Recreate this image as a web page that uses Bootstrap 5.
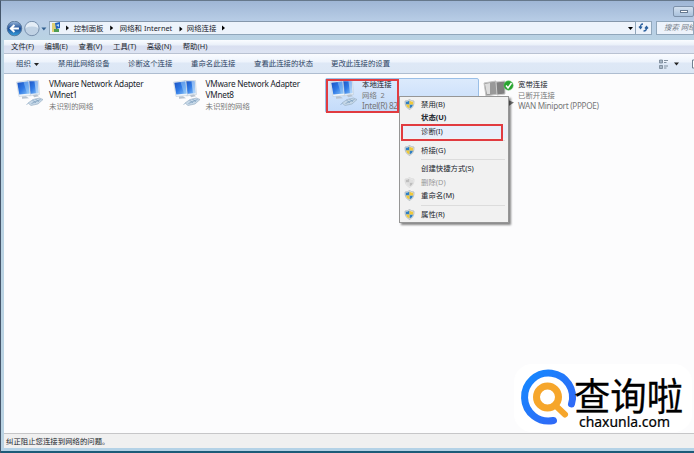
<!DOCTYPE html>
<html lang="zh-CN">
<head>
<meta charset="utf-8">
<title>网络连接</title>
<link href="https://cdn.jsdelivr.net/npm/bootstrap@5.3.0/dist/css/bootstrap.min.css" rel="stylesheet">
<style>
body{width:694px;height:453px;overflow:hidden;font:7.4px/11px "Noto Sans","Noto Sans CJK SC",sans-serif;color:#20242c;background:#b6d3e5}
.win{height:453px;border-left:1px solid #45566b;border-top:1px solid #66788b;background:linear-gradient(#9fb6d5 0,#b8cde6 20px,#bad3e3 40px)}
.title-strip{height:20px}
.min-btn{width:21px;height:11px;margin:5px 0 0 672px;border:1px solid #7d91aa;border-radius:2px;background:linear-gradient(#d2e0ef,#aac1dc)}
.min-btn i{width:8px;height:3px;border:1px solid #667990;background:#fff}
.addr{height:19px}
.nav-btns{width:48px;height:19px}
.crumbs{width:589px;height:14px;border:1px solid #91a7bb;border-top-color:#8597ab;background:#edf3fb}
.crumb-mid{width:67px}
.reload{width:16px;height:14px;border:1px solid #91a7bb;border-left:0;background:#edf3fb}
.search{width:38px;height:14px;margin-left:4px;border:1px solid #91a7bb;background:#edf3fb;color:#777f8a;font-style:italic;padding-left:7px}
.body-area{margin-left:3px;height:408px;background:#fcfcfd}
.menus{height:14px;background:linear-gradient(#fafcff 0,#eaf0f9 5px,#d9dff0 6px,#dde4f3);border-bottom:1px solid #b9c2d2;padding-left:7px}
.tools{height:20px;background:linear-gradient(#fafcff 0,#edf3fc 8px,#dee8f6 9px,#dce7f5);border-bottom:1px solid #aebdd0;padding-left:12px;color:#2d4463}
.menus span,.tools span,.crumbs span{flex:none;white-space:nowrap}
.files{height:359px}
.conn{width:156.500px;padding:5px 0 0 11px;height:40px;line-height:10.8px;white-space:nowrap}
.conn svg{flex:none}
.conn .label{margin-left:4px;font-size:8.2px;letter-spacing:-.22px}
.conn .zh{font-size:7.4px;letter-spacing:0}
.conn .latin{font-size:8.2px;letter-spacing:-.3px}
.muted{color:#777}
.picked{margin:4px 0 0 8px;height:35px;background:linear-gradient(#dceafc,#c3dbfa);border:1px solid #9abfe7;border-radius:2px;padding:0 0 0 3px;width:154px;overflow:hidden}
.picked .label{margin-left:3px}
.status-row{height:15px;background:#f0f0f0;border-top:1px solid #c6c6c8;padding-left:2px;line-height:14px}
.frame-end{height:5px;background:#b4d2e6;border-bottom:2px solid #1c5b78}
.red-box{position:absolute;border:2px solid #e13b40}
.popup{position:absolute;left:399px;top:96px;width:110px;height:127px;background:#f1f1f1;border:1px solid #969696;box-shadow:2px 2px 2px #0007;padding:.6px 1px 0}
.entry{height:13.6px;padding-left:3px;white-space:nowrap}
.entry svg,.entry b.gap{width:11px;height:11px;flex:none;margin-right:6px}
.hot{background:#e8effa}
.off{color:#999}
.off svg{filter:grayscale(1);opacity:.4}
.sep{height:1px;margin:2px 2px 2px 20px;background:#dcdcdc}
.brand{position:absolute;left:512px;top:362px;width:182px;height:72px}
</style>
<script src="https://cdn.jsdelivr.net/npm/bootstrap@5.3.0/dist/js/bootstrap.bundle.min.js"></script>
</head>
<body>
<svg width="0" height="0" class="position-absolute">
<defs>
<linearGradient id="scr" x2="1" y2="1"><stop stop-color="#1a50c0"/><stop offset=".5" stop-color="#2f7ae6"/><stop offset="1" stop-color="#8fc7f8"/></linearGradient>
<linearGradient id="orb" x2="0" y2="1"><stop stop-color="#9db9da"/><stop offset=".5" stop-color="#1d4f99"/><stop offset="1" stop-color="#36a2df"/></linearGradient>
<linearGradient id="ring" x2="1" y2="1"><stop stop-color="#1489ff"/><stop offset="1" stop-color="#3564f5"/></linearGradient>
<symbol id="pcs" viewBox="0 0 30 30">
<path d="M12 1.500l11.500 0 1 14-10 1.500z" fill="#e4ebf3" stroke="#b9c6d3" stroke-width=".5"/><path d="M13 2.200h9.500l.8 11.800-9 1z" fill="url(#scr)"/><path d="M19.500 2.200h3l.8 11.800-2.300.3z" fill="#cfe6fc" opacity=".6"/>
<path d="M1.500 3l12.500-1.500 1.500 15-11.500 1z" fill="#f0f5fa" stroke="#b9c6d3" stroke-width=".5"/><path d="M2.300 3.800l11-1.400 1.300 12.200-10.300.9z" fill="url(#scr)"/><path d="M8.500 3l4.800-.6 1.300 12.200-2.600.2z" fill="#9fd0fa" opacity=".5"/>
<path d="M7 17.500l4-.3 3 2-7 .5zM18 16l4-.5 2 1.700-5 1z" fill="#b8c3cf"/>
<path d="M13 24l5-3.500 6.500-1.500 3.500 1.500-5 4.500-7 1.500z" fill="#c6d8e8" stroke="#92a9bf" stroke-width=".6"/><path d="M17.500 21.300l3.500 2.400M20.500 20.300l3.500 2.400M16.500 24.500l9-4M13 24.500l-1.500 1" stroke="#6b90b4" stroke-width=".6" fill="none"/>
</symbol>
<symbol id="shield" viewBox="0 0 11 11"><path d="M5.500 .5Q7.500 2 10 2Q10.500 8 5.500 10.500Q.5 8 1 2Q3.500 2 5.500 .5z" fill="#e6e9ea" stroke="#98a3aa" stroke-width=".6"/><path d="M5.500 1.500V5.500H1.800V2.800Q4 2.700 5.500 1.500zM5.500 5.500H9.100Q8.500 8.300 5.500 9.600z" fill="#2e7fc4"/><path d="M5.500 1.500V5.500H9.200V2.800Q7 2.700 5.500 1.500zM5.500 5.500H1.900Q2.500 8.300 5.500 9.600z" fill="#efc83b"/></symbol>
</defs>
</svg>
<main class="win">
<div class="title-strip d-flex"><div class="min-btn d-flex justify-content-center align-items-center"><i></i></div></div>
<div class="addr d-flex align-items-start">
<svg class="nav-btns" viewBox="1 21 48 19"><circle cx="14.500" cy="28.500" r="7.300" fill="url(#orb)" stroke="#526e91" stroke-width=".8"/><path d="M19 28.500h-8M14.500 25l-3.700 3.500 3.700 3.500" fill="none" stroke="#fff" stroke-width="2"/><circle cx="32" cy="28.500" r="7.200" fill="#c0d2e4" stroke="#7890ac"/><path d="M25.500 28q6.500-3 13 0a6.500 6 0 0 0-13 0z" fill="#e4edf6"/><path d="M41.500 27.500h5l-2.500 3z" fill="#315f90"/></svg>
<div class="crumbs d-flex align-items-center">
<svg width="24" height="12" viewBox="50 22 24 12" class="flex-shrink-0"><path d="M52 23h5v9h-5z" fill="#e1cf72"/><path d="M55 23l5-1v6l-4 1z" fill="#2162be"/><path d="M54 29h5v3h-5z" fill="#4f9d53"/><path d="M56 25l3-1v3z" fill="#b4d9f6"/><path d="M66 25.500l3 2.500-3 2.500z" fill="#111"/></svg>
<span>控制面板</span><svg width="16.400" height="8" viewBox="0 0 16 8"><path d="M7 1.500l3 2.500-3 2.500z"/></svg><span class="crumb-mid">网络和 Internet<svg class="ms-1" width="8" height="8" viewBox="0 0 8 8"><path d="M3.500 1.500l3 2.500-3 2.500z"/></svg></span><span>网络连接</span><svg width="14" height="8" viewBox="0 0 14 8"><path d="M6 1.500l3 2.500-3 2.500z"/></svg>
<svg width="8" height="8" class="ms-auto" viewBox="0 0 8 8"><path d="M1 3h5l-2.500 3z"/></svg>
</div>
<div class="reload d-flex justify-content-center"><svg width="11" height="11" viewBox="0 0 11 11"><path d="M5 2Q2 2 2.500 6M1 4.500l1.600 2L4 4.500M5.500 9Q9 9 8.500 5M7 6.500l1.500-2 1.500 2" fill="none" stroke="#2d629f" stroke-width="1.300"/></svg></div>
<div class="search text-nowrap overflow-hidden">搜索 网络</div>
</div>
<div class="body-area">
<div class="menus d-flex align-items-center"><span style="width:33.500px">文件(F)</span><span style="width:34px">编辑(E)</span><span style="width:34.500px">查看(V)</span><span style="width:33.700px">工具(T)</span><span style="width:36px">高级(N)</span><span>帮助(H)</span></div>
<div class="tools d-flex align-items-center"><span style="width:42px">组织 <svg width="7" height="5" viewBox="0 0 7 5"><path d="M1 1h5L3.500 4z" fill="#222"/></svg></span><span style="width:70px">禁用此网络设备</span><span style="width:63px">诊断这个连接</span><span style="width:63px">重命名此连接</span><span style="width:77px">查看此连接的状态</span><span>更改此连接的设置</span>
<svg class="ms-auto" width="36" height="14" viewBox="658 56 36 14"><path d="M659.500 59h3v3h-3zM659.500 64.500h3v3h-3z" fill="#a7b5c4" stroke="#687989" stroke-width=".7"/><path d="M664 59.500h4M664 61.500h2.500M664 65h4M664 67h2.500" stroke="#687989" stroke-width=".8"/><path d="M674 61.500h5l-2.500 3z" fill="#222"/><path d="M696 59h-3.500v8h3" fill="#fff" stroke="#718192"/></svg></div>
<div class="files d-flex align-items-start">
<div class="conn d-flex"><svg width="30" height="30"><use href="#pcs"/></svg><div class="label">VMware Network Adapter<br>VMnet1<div class="muted zh">未识别的网络</div></div></div>
<div class="conn d-flex"><svg width="30" height="30"><use href="#pcs"/></svg><div class="label">VMware Network Adapter<br>VMnet8<div class="muted zh">未识别的网络</div></div></div>
<div class="conn picked d-flex"><svg width="30" height="30"><use href="#pcs"/></svg><div class="label zh">本地连接<br><span class="muted">网络&nbsp; 2<br><span class="latin">Intel(R) 825</span></span></div></div>
<div class="conn d-flex ps-1"><svg width="31" height="30" viewBox="0 0 31 30"><path d="M1 4l12-2 2 13-12 2z" fill="#999" stroke="#c4c4c4"/><path d="M13 3l9-1v13l-8 1z" fill="#808080" stroke="#ccc"/><path d="M2 5l5-1v11H4z" fill="#ddd"/><path d="M25 21l6 2.500-6 4z" fill="#777"/><circle cx="25.500" cy="6.500" r="4.700" fill="#27a42f" stroke="#66bd68" stroke-width=".5"/><path d="M23 6.500l2 2.500 3.500-5" fill="none" stroke="#fff" stroke-width="1.500"/></svg><div class="label zh">宽带连接<br><span class="muted">已断开连接<br><span class="latin">WAN Miniport (PPPOE)</span></span></div></div>
</div>
<div class="status-row">纠正阻止您连接到网络的问题。</div>
</div>
<div class="frame-end"></div>
</main>
<div class="red-box" style="left:326px;top:79px;width:73px;height:34px"></div>
<div class="popup">
<div class="entry d-flex align-items-center"><svg><use href="#shield"/></svg>禁用(B)</div>
<div class="entry d-flex align-items-center fw-bold"><b class="gap"></b>状态(U)</div>
<div class="entry hot d-flex align-items-center"><b class="gap"></b>诊断(I)</div>
<div class="sep"></div>
<div class="entry d-flex align-items-center"><svg><use href="#shield"/></svg>桥接(G)</div>
<div class="sep"></div>
<div class="entry d-flex align-items-center"><b class="gap"></b>创建快捷方式(S)</div>
<div class="entry off d-flex align-items-center"><svg><use href="#shield"/></svg>删除(D)</div>
<div class="entry d-flex align-items-center"><svg><use href="#shield"/></svg>重命名(M)</div>
<div class="sep"></div>
<div class="entry d-flex align-items-center"><svg><use href="#shield"/></svg>属性(R)</div>
</div>
<div class="red-box" style="left:401px;top:124px;width:102px;height:17px"></div>
<svg class="brand" viewBox="512 362 182 72"><rect x="514" y="364" width="178" height="68" rx="18" fill="#fff"/>
<path d="M571.500 404A24 24 0 1 0 553.500 420.500" fill="none" stroke="url(#ring)" stroke-width="7" stroke-linecap="round"/><circle cx="547.500" cy="397" r="11" fill="none" stroke="#f6a62b" stroke-width="7"/><path d="M556 406l9 8.500" stroke="#f6a62b" stroke-width="6" stroke-linecap="round"/>
<text x="574" y="409.500" font-family="Noto Sans CJK SC, sans-serif" font-size="38" stroke="#000" stroke-width=".3" textLength="109" lengthAdjust="spacingAndGlyphs">查询啦</text><text x="579" y="426.500" font-family="Noto Sans, sans-serif" font-size="13.500" textLength="91" lengthAdjust="spacingAndGlyphs" stroke="#000" stroke-width=".2">chaxunla.com</text></svg>
</body>
</html>
